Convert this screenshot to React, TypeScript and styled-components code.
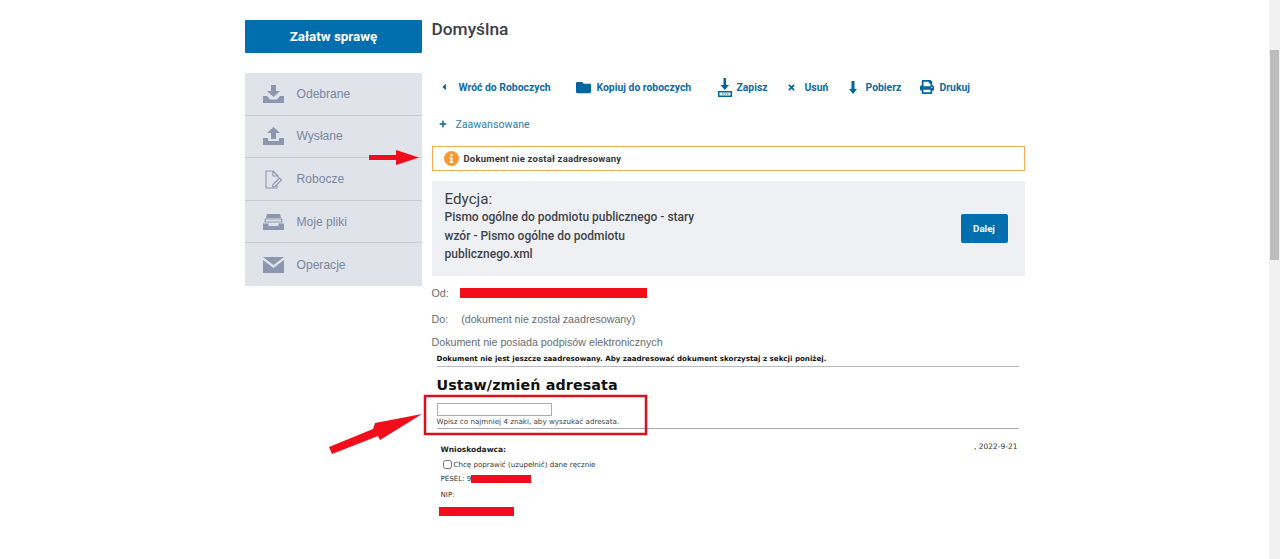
import React from "react";
import styled, { createGlobalStyle } from "styled-components";
import { FaFolder, FaPrint, FaTimes, FaInfo, FaPlus, FaCaretLeft } from "react-icons/fa";

const GlobalStyle = createGlobalStyle`
  html, body {
    margin: 0;
    height: 100%;
    overflow: hidden;
    background: #fff;
    font-family: "Liberation Sans", Arial, sans-serif;
  }
`;

const Page = styled.div`
  position: relative;
  width: 1280px;
  height: 559px;
  overflow: hidden;
  display: grid;
  grid-template-columns: 177px 593px;
  column-gap: 9.5px;
  padding: 20px 0 0 245px;
  box-sizing: border-box;
`;

const Sidebar = styled.aside`
  display: flex;
  flex-direction: column;
`;

const MainButton = styled.button`
  height: 33px;
  border: 0;
  border-radius: 1px;
  background: #016fad;
  color: #fff;
  font: 700 13.4px Roboto, sans-serif;
  margin-bottom: 20px;
  padding: 0;
`;

const Menu = styled.nav`
  background: #e0e3e9;
  display: flex;
  flex-direction: column;
`;

const MenuItem = styled.a`
  height: 42.6px;
  box-sizing: border-box;
  display: flex;
  align-items: center;
  gap: 12.5px;
  padding-left: 18px;
  color: #7b87a3;
  font-size: 12.1px;
  border-bottom: 1px solid #c6c9ce;
  &:last-child {
    border-bottom: 0;
  }
`;

const MenuIcon = styled.svg`
  width: 21px;
  height: 18px;
  fill: #8d97b0;
  flex: none;
`;

const Content = styled.main`
  display: flex;
  flex-direction: column;
  min-width: 0;
`;

const Title = styled.h1`
  margin: 0;
  height: 56px;
  font: 500 17.3px/19px Roboto, sans-serif;
  color: #3a4048;
`;

const Toolbar = styled.div`
  display: flex;
  align-items: center;
  height: 22px;
  padding-left: 7px;
`;

const Action = styled.a<{ $gap?: number; $width: number }>`
  display: flex;
  align-items: center;
  width: ${(p) => p.$width}px;
  flex: none;
  gap: ${(p) => p.$gap ?? 6}px;
  color: #0f6aa3;
  font: 700 10.4px Roboto, sans-serif;
  white-space: nowrap;
  svg {
    flex: none;
    fill: #01659f;
  }
`;

const Advanced = styled.a`
  display: flex;
  align-items: center;
  gap: 9px;
  height: 16px;
  margin: 18px 0 14px 7px;
  color: #2f7cac;
  font: 400 10.6px Roboto, sans-serif;
  svg {
    fill: #01659f;
  }
`;

const Alert = styled.div`
  height: 25px;
  box-sizing: border-box;
  border: 1.5px solid #f4a957;
  display: flex;
  align-items: center;
  gap: 5px;
  padding-left: 11px;
  font: 700 9.5px "Roboto", sans-serif;
  letter-spacing: 0.2px;
  color: #33373b;
`;

const InfoDot = styled.span`
  width: 15px;
  height: 15px;
  border-radius: 50%;
  background: #f79a33;
  color: #fff;
  display: flex;
  align-items: center;
  justify-content: center;
`;

const EditBox = styled.section`
  margin-top: 10px;
  height: 95px;
  box-sizing: border-box;
  background: #eff0f4;
  padding: 9px 17px 0 13px;
  display: flex;
  justify-content: space-between;
  align-items: flex-start;
`;

const EditHeading = styled.div`
  font: 400 15.2px/18px Roboto, sans-serif;
  color: #3a3f45;
`;

const EditName = styled.div`
  width: 256px;
  font: 500 12px/18.5px Roboto, sans-serif;
  color: #3f444a;
`;

const NextButton = styled.button`
  margin-top: 24px;
  width: 47px;
  height: 29px;
  border: 0;
  border-radius: 2px;
  background: #016fad;
  color: #fff;
  font: 700 9.7px Roboto, sans-serif;
  padding: 0;
`;

const MetaRow = styled.div<{ $top: number; $gap?: number }>`
  display: flex;
  align-items: center;
  height: 14px;
  margin-top: ${(p) => p.$top}px;
  gap: ${(p) => p.$gap ?? 13}px;
  color: #686c70;
  font-size: 10.7px;
`;

const Redaction = styled.span<{ $w: number; $h?: number }>`
  display: inline-block;
  width: ${(p) => p.$w}px;
  height: ${(p) => p.$h ?? 10}px;
  background: #f20d1a;
`;

const Form = styled.div`
  padding: 0 6px 0 5px;
  margin-top: 5px;
  font-family: "DejaVu Sans", Verdana, sans-serif;
  color: #333;
`;

const Notice = styled.div`
  font-size: 7.1px;
  font-weight: 700;
  line-height: 9px;
  color: #111;
  padding-bottom: 3px;
  border-bottom: 1px solid #b8bbc4;
`;

const AddressTitle = styled.h2`
  margin: 10px 0 9px;
  font-size: 14.3px;
  line-height: 17px;
  font-weight: 700;
  color: #111;
  letter-spacing: 0.1px;
`;

const AddressInput = styled.input`
  display: block;
  width: 115px;
  height: 13px;
  box-sizing: border-box;
  border: 1px solid #a9acb6;
  padding: 0;
  background: #fff;
`;

const Hint = styled.div`
  font-size: 7.15px;
  line-height: 9px;
  margin-top: 1px;
  padding-bottom: 2px;
  border-bottom: 1px solid #a6a9b2;
  color: #444;
`;

const ApplicantHead = styled.div`
  display: flex;
  justify-content: space-between;
  align-items: flex-start;
  padding: 13px 1px 0 4px;
  font-size: 7.5px;
  line-height: 9px;
`;

const Bold = styled.b`
  color: #222;
  margin-top: 3px;
`;

const CheckRow = styled.label`
  display: flex;
  align-items: center;
  gap: 2px;
  margin: 5px 0 0 6px;
  font-size: 7.1px;
  line-height: 9px;
  height: 10px;
  input {
    width: 9px;
    height: 9px;
    margin: 0;
  }
`;

const Line = styled.div<{ $top: number }>`
  display: flex;
  align-items: center;
  margin: ${(p) => p.$top}px 0 0 4px;
  font-size: 7.1px;
  line-height: 9px;
  height: 9px;
`;

const Overlay = styled.svg`
  position: absolute;
  left: 0;
  top: 0;
  pointer-events: none;
`;

const FloatingBar = styled(Redaction)`
  margin: 8px 0 0 2px;
  display: block;
`;

const ScrollTrack = styled.div`
  position: absolute;
  top: 0;
  right: 0;
  width: 11px;
  height: 100%;
  background: #f1f1f1;
`;

const ScrollThumb = styled.div`
  margin: 50px 1px 0;
  height: 210px;
  background: #bdbdbd;
`;

const DownloadIcon = () => (
  <MenuIcon viewBox="0 0 21 18">
    <path d="M8 0h5v6h4l-6.500 6L4 6h4z" />
    <path d="M0 11h4l3 3.500h7L17 11h4v7H0z" />
  </MenuIcon>
);
const UploadIcon = () => (
  <MenuIcon viewBox="0 0 21 18">
    <path d="M10.500 0 17 6h-4v6H8V6H4z" />
    <path d="M0 11h5v3h11v-3h5v7H0z" />
  </MenuIcon>
);
const DraftIcon = () => (
  <MenuIcon viewBox="0 0 21 18" style={{ height: 20 }}>
    <path
      d="M10 1H3v17h11v-3M10 1l5 5v2M10 1v5h5"
      fill="none"
      stroke="#8d97b0"
      strokeWidth="1.100"
    />
    <path d="M10 14.500 16.500 8l2 2-6.500 6.500-2.500.5z" fill="none" stroke="#8d97b0" strokeWidth="1.100" />
  </MenuIcon>
);
const FilesIcon = () => (
  <MenuIcon viewBox="0 0 21 18">
    <path d="M4 1h13l1 4H3z" />
    <path d="M2.500 6h16l.5 3H2z" fill="none" stroke="#8d97b0" strokeWidth="1.200" />
    <path d="M0 10.500h5.500V13h10v-2.500H21V17H0z" />
  </MenuIcon>
);
const MailIcon = () => (
  <MenuIcon viewBox="0 0 21 18">
    <path d="M0 1h21l-10.500 8z" />
    <path d="M0 4l10.500 8L21 4v13H0z" />
  </MenuIcon>
);

const menu = [
  { label: "Odebrane", icon: <DownloadIcon /> },
  { label: "Wysłane", icon: <UploadIcon /> },
  { label: "Robocze", icon: <DraftIcon /> },
  { label: "Moje pliki", icon: <FilesIcon /> },
  { label: "Operacje", icon: <MailIcon /> },
];

export default function App() {
  return (
    <Page>
      <GlobalStyle />
      <Sidebar>
        <MainButton>Załatw sprawę</MainButton>
        <Menu>
          {menu.map((item) => (
            <MenuItem key={item.label}>
              {item.icon}
              {item.label}
            </MenuItem>
          ))}
        </Menu>
      </Sidebar>

      <Content>
        <Title>Domyślna</Title>
        <Toolbar>
          <Action $width={137} $gap={10}>
            <FaCaretLeft size={10} />
            Wróć do Roboczych
          </Action>
          <Action $width={141}>
            <FaFolder size={15} />
            Kopiuj do roboczych
          </Action>
          <Action $width={70} $gap={4}>
            <svg width="16" height="19" viewBox="0 0 16 19">
              <path d="M6.500 0h2.500v7h3l-4.200 5-4.300-5h3z" />
              <path d="M1 13h14v6H1zm1.500 1.500v3h11v-3zM5 15.500h1.500v1H5zm2.500 0H9v1H7.500zm2.500 0h1.500v1H10z" fillRule="evenodd" />
            </svg>
            Zapisz
          </Action>
          <Action $width={62} $gap={9}>
            <FaTimes size={9} />
            Usuń
          </Action>
          <Action $width={71} $gap={9}>
            <svg width="8" height="13" viewBox="0 0 8 13">
              <path d="M2.500 0h3v8H8l-4 5-4-5h2.500z" />
            </svg>
            Pobierz
          </Action>
          <Action $width={60}>
            <FaPrint size={14} />
            Drukuj
          </Action>
        </Toolbar>
        <Advanced>
          <FaPlus size={8} />
          Zaawansowane
        </Advanced>
        <Alert>
          <InfoDot>
            <FaInfo size={9} />
          </InfoDot>
          Dokument nie został zaadresowany
        </Alert>
        <EditBox>
          <div>
            <EditHeading>Edycja:</EditHeading>
            <EditName>Pismo ogólne do podmiotu publicznego - stary wzór - Pismo ogólne do podmiotu publicznego.xml</EditName>
          </div>
          <NextButton>Dalej</NextButton>
        </EditBox>
        <MetaRow $top={10} $gap={11}>
          Od:
          <Redaction $w={187} />
        </MetaRow>
        <MetaRow $top={12}>
          Do:
          <span>(dokument nie został zaadresowany)</span>
        </MetaRow>
        <MetaRow $top={9}>Dokument nie posiada podpisów elektronicznych</MetaRow>
        <Form>
          <Notice>Dokument nie jest jeszcze zaadresowany. Aby zaadresować dokument skorzystaj z sekcji poniżej.</Notice>
          <AddressTitle>Ustaw/zmień adresata</AddressTitle>
          <AddressInput />
          <Hint>Wpisz co najmniej 4 znaki, aby wyszukać adresata.</Hint>
          <ApplicantHead>
            <Bold>Wnioskodawca:</Bold>
            <span>, 2022-9-21</span>
          </ApplicantHead>
          <CheckRow>
            <input type="checkbox" />
            Chcę poprawić (uzupełnić) dane ręcznie
          </CheckRow>
          <Line $top={5}>
            PESEL: 9
            <Redaction $w={60} $h={8} />
          </Line>
          <Line $top={7}>NIP:</Line>
          <FloatingBar $w={75} $h={9} />
        </Form>
      </Content>

      <Overlay width="1280" height="559" viewBox="0 0 1280 559">
        <path d="M369 155h27v-5l23 7.500-23 7.500v-5h-27z" fill="#f20d1a" />
        <path d="M329 447l44-18 2-6 47-9-42 26-2-4-46 18z" fill="#f20d1a" />
        <rect x="425" y="396" width="221" height="38" fill="none" stroke="#dc0f1e" strokeWidth="2.500" />
      </Overlay>
      <ScrollTrack>
        <ScrollThumb />
      </ScrollTrack>
    </Page>
  );
}
